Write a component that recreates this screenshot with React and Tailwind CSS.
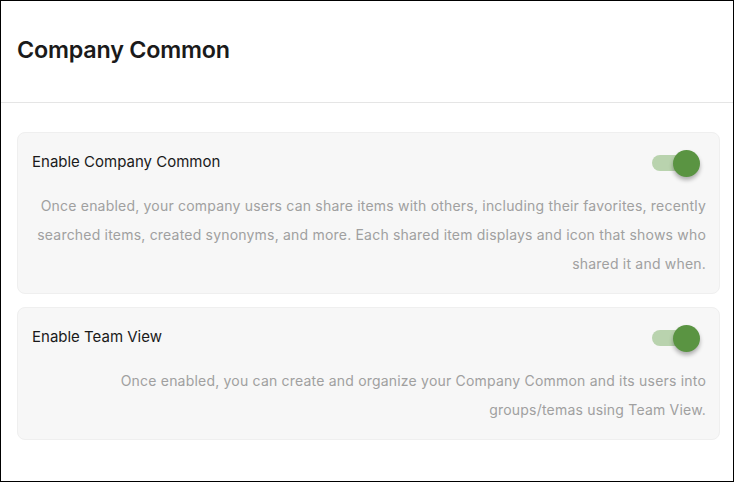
import React from "react";

function Toggle() {
  return (
    <div className="relative w-[50px] h-[28px] flex items-center shrink-0">
      <div className="ml-[1px] w-[40px] h-[16px] rounded-full bg-[#b9d3ae]" />
      <div className="absolute right-[1px] top-[1px] w-[27px] h-[27px] rounded-full bg-[#5a9442] shadow-[0_3px_4px_rgba(0,0,0,0.3)]" />
    </div>
  );
}

function Card({ title, children }) {
  return (
    <div className="rounded-[8px] border border-[#efefef] bg-[#f7f7f7] pl-[14px] pr-[13px] pt-[15px] pb-[15px]">
      <div className="flex items-center justify-between h-[28px]">
        <span className="text-[15px] text-[#1a1a1a]">{title}</span>
        <div className="mr-[5px] mt-[2px]">
          <Toggle />
        </div>
      </div>
      <p className="mt-[15px] text-right text-[14px] leading-[29px] text-[#a0a0a0] tracking-[0.2px]">
        {children}
      </p>
    </div>
  );
}

export default function App() {
  return (
    <div
      className="w-[734px] h-[482px] border border-black bg-white box-border overflow-hidden"
      style={{ fontFamily: "Inter, 'Noto Sans', sans-serif" }}
    >
      <div className="h-[102px] border-b border-[#e5e5e5] flex items-center pl-[16px]">
        <h1 className="text-[23.3px] font-semibold text-[#1a1a1a] tracking-[-0.2px] mt-[-3px]">
          Company Common
        </h1>
      </div>
      <div className="pl-[16px] pr-[13px] pt-[29px] flex flex-col gap-[13px]">
        <Card title="Enable Company Common">
          Once enabled, your company users can share items with others, including their favorites, recently
          searched items, created synonyms, and more. Each shared item displays and icon that shows who
          shared it and when.
        </Card>
        <Card title="Enable Team View">
          Once enabled, you can create and organize your Company Common and its users into groups/temas
          using Team View.
        </Card>
      </div>
    </div>
  );
}
